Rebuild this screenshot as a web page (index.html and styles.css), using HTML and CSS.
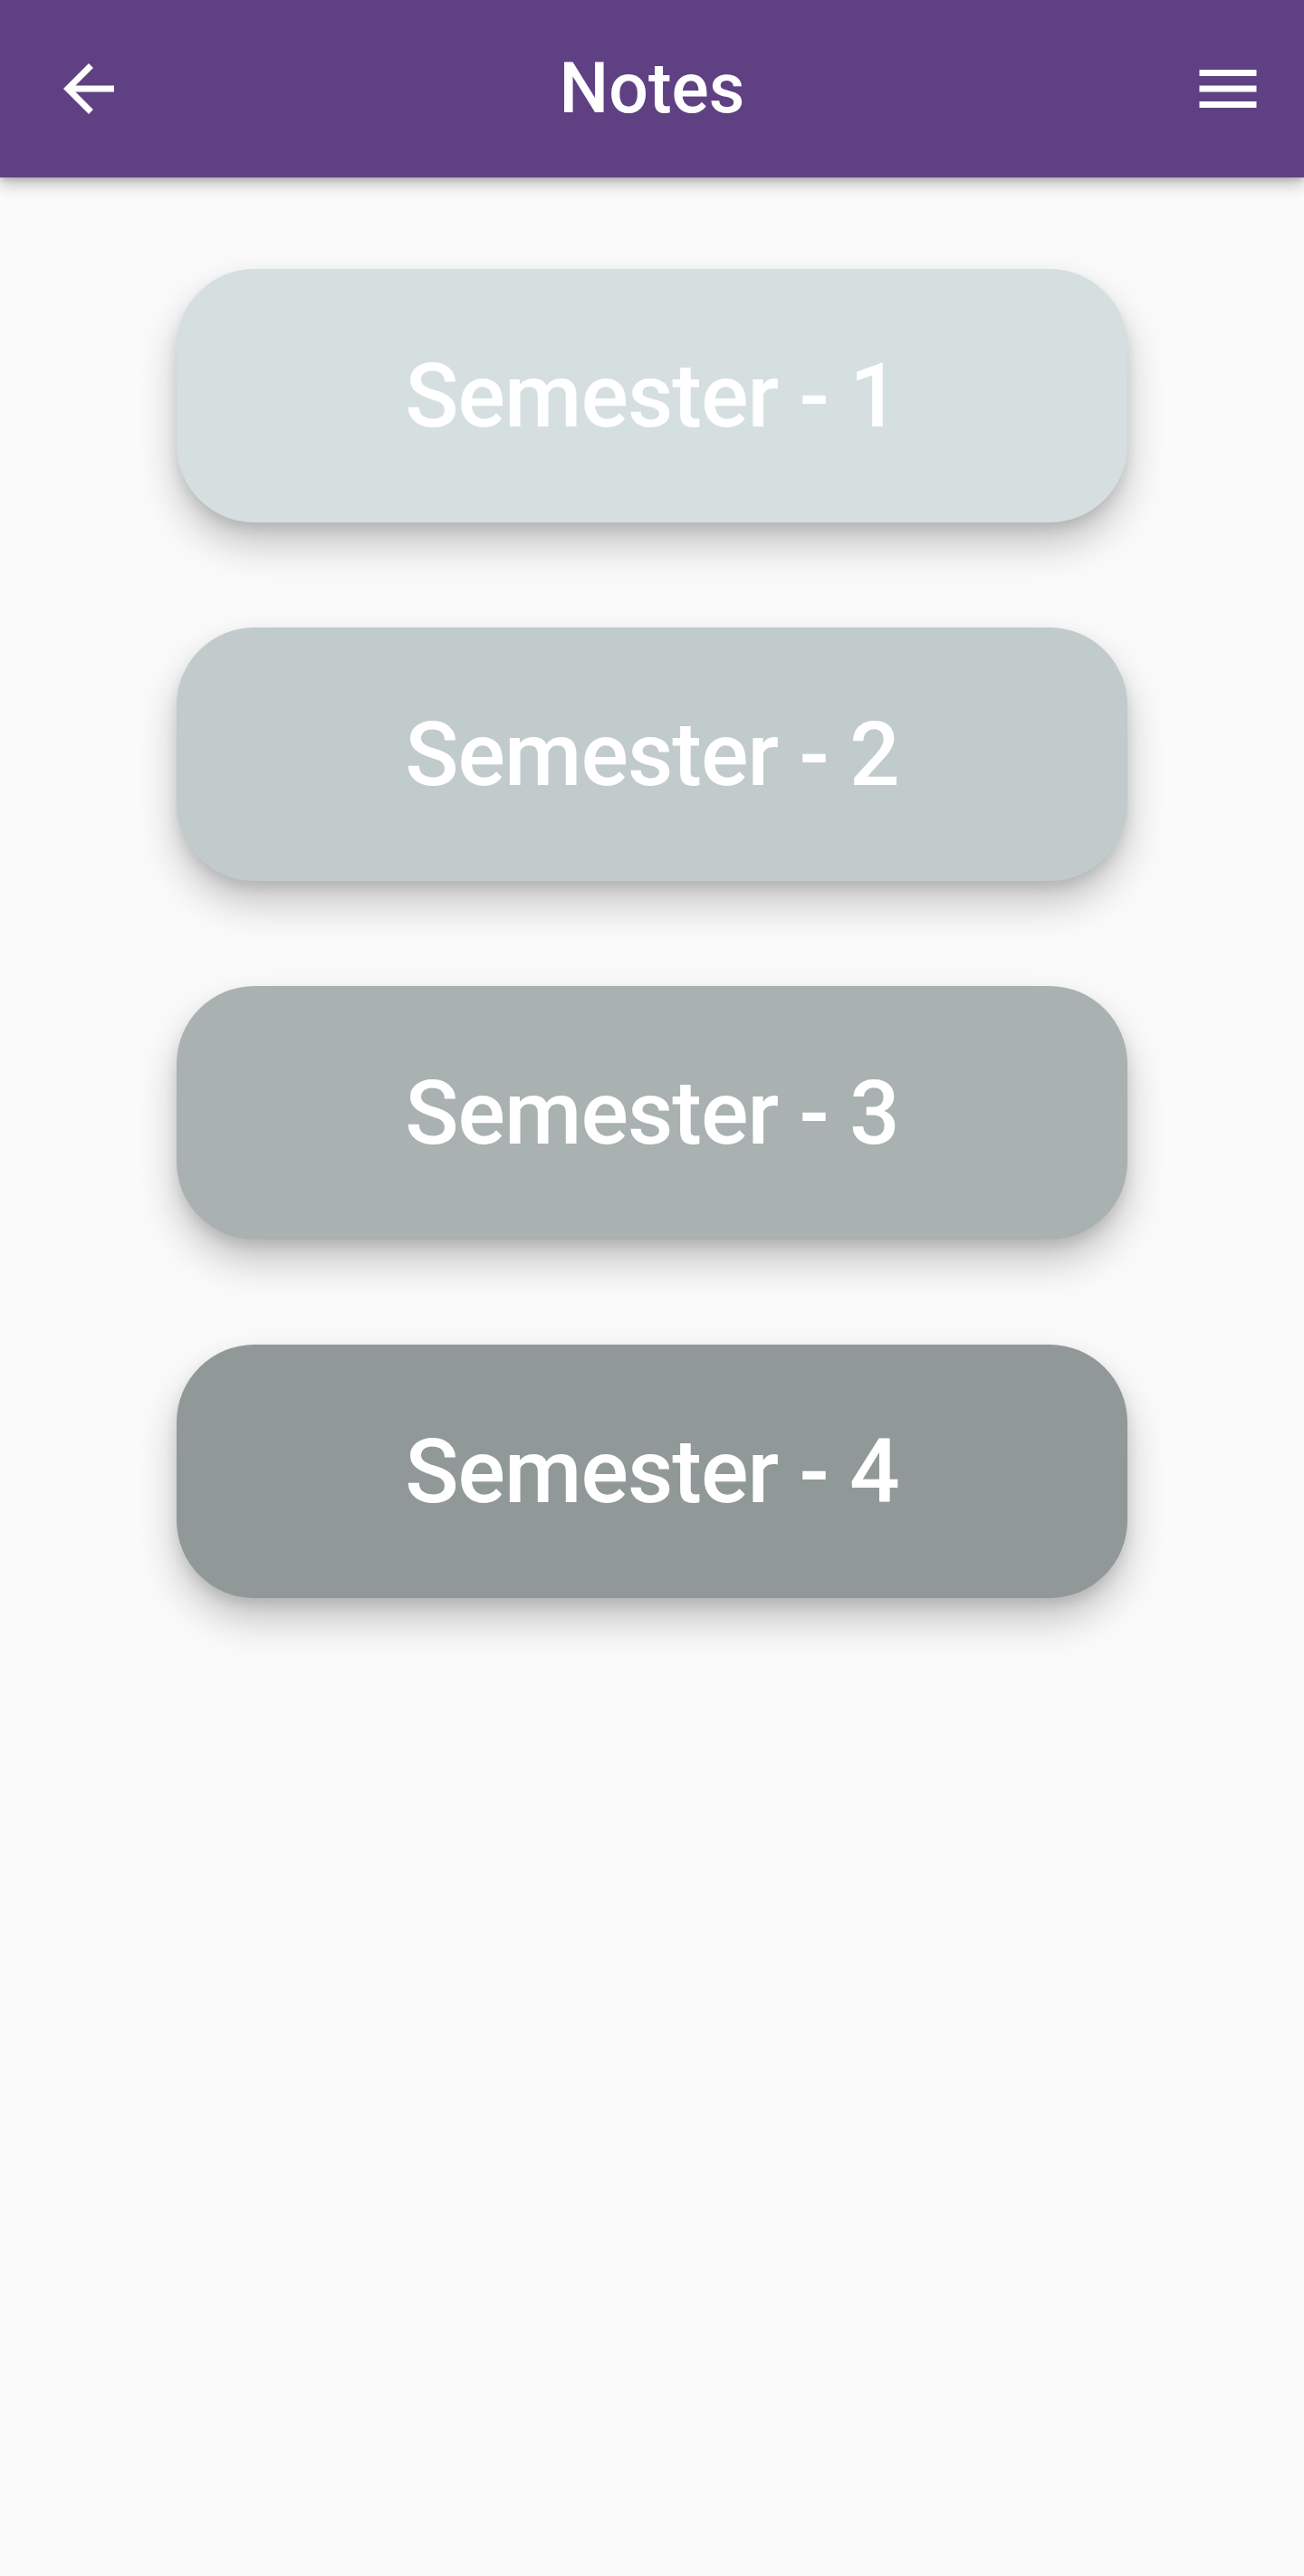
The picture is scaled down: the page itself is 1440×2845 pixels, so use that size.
FILE: index.html
```html
<!DOCTYPE html>
<html lang="en">
<head>
<meta charset="utf-8">
<title>Notes</title>
<link rel="stylesheet" href="styles.css">
</head>
<body>
<header class="appbar">
  <button class="icon-btn back" aria-label="Back">
    <svg viewBox="0 0 24 24" width="84" height="84"><path fill="#fff" d="M20 11H7.83l5.59-5.59L12 4l-8 8 8 8 1.41-1.41L7.83 13H20v-2z"/></svg>
  </button>
  <h1 class="title">Notes</h1>
  <button class="icon-btn menu" aria-label="Menu">
    <svg viewBox="0 0 24 24" width="84" height="84"><path fill="#fff" d="M3 18h18v-2H3v2zm0-5h18v-2H3v2zm0-7v2h18V6H3z"/></svg>
  </button>
</header>
<main class="list">
  <a class="sem sem1">Semester - 1</a>
  <a class="sem sem2">Semester - 2</a>
  <a class="sem sem3">Semester - 3</a>
  <a class="sem sem4">Semester - 4</a>
</main>
</body>
</html>
```
FILE: styles.css
```css
html, body {
  margin: 0;
  padding: 0;
}
body {
  background: #fafafa;
  font-family: Roboto, "Noto Sans", sans-serif;
  min-height: 2845px;
}
.appbar {
  height: 196px;
  background: #5f4083;
  display: flex;
  align-items: center;
  justify-content: space-between;
  position: relative;
  box-shadow: 0 8px 16px rgba(0,0,0,0.22), 0 3px 6px rgba(0,0,0,0.14);
  z-index: 2;
}
.icon-btn {
  background: none;
  border: 0;
  padding: 0;
  width: 84px;
  height: 84px;
  display: flex;
}
.back { margin-left: 56px; }
.menu { margin-right: 42px; }
.title {
  margin: 0;
  color: #fff;
  font-size: 77px;
  font-weight: 500;
  line-height: 1;
  position: absolute;
  left: 0;
  right: 0;
  text-align: center;
  pointer-events: none;
}
.list {
  display: flex;
  flex-direction: column;
  align-items: center;
  gap: 116px;
  padding-top: 101px;
}
.sem {
  width: 1050px;
  height: 280px;
  border-radius: 86px;
  display: flex;
  align-items: center;
  justify-content: center;
  color: #fff;
  font-size: 98px;
  font-weight: 500;
  letter-spacing: -1px;
  box-shadow: 0 24px 44px rgba(0,0,0,0.22), 0 8px 14px rgba(0,0,0,0.10);
}
.sem1 { background: #d5dfdf; }
.sem2 { background: #c1cbcb; }
.sem3 { background: #a9b1b1; }
.sem4 { background: #919998; }
```
